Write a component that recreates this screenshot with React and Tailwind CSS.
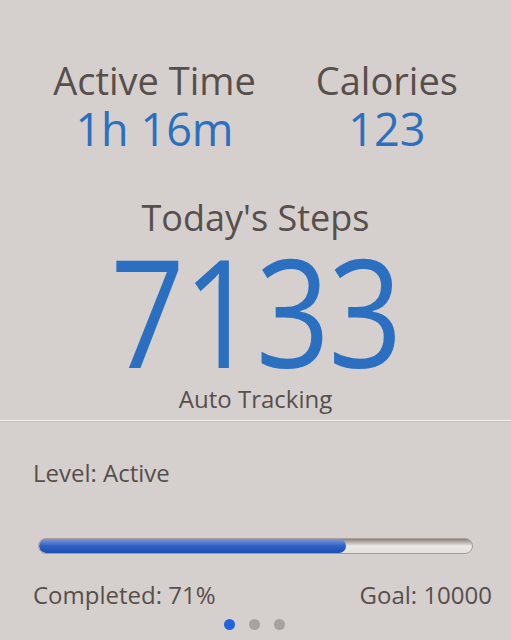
export default function App() {
  return (
    <div
      className="w-[511px] h-[640px] bg-[#d5d0cd] text-[#574f4c] flex flex-col overflow-hidden"
      style={{ fontFamily: '"Open Sans", sans-serif' }}
    >
      {/* top stats */}
      <div className="flex justify-center gap-[60px] pt-[56px]">
        <div className="flex flex-col items-center">
          <div className="text-[38px] leading-[48px]">Active Time</div>
          <div className="text-[45px] leading-[50px] text-[#2b6fc1]">1h 16m</div>
        </div>
        <div className="flex flex-col items-center">
          <div className="text-[38px] leading-[48px]">Calories</div>
          <div className="text-[45px] leading-[50px] text-[#2b6fc1]">123</div>
        </div>
      </div>

      {/* steps */}
      <div className="flex flex-col items-center mt-[42px]">
        <div className="text-[36px] leading-[44px]">Today's Steps</div>
        <div className="text-[151px] leading-[140px] tracking-[-2px] scale-x-[0.86] text-[#2b6fc1]">7133</div>
        <div className="mt-[4px] text-[24px] leading-[30px]">Auto Tracking</div>
      </div>

      <div className="mt-[6px] h-[2px] bg-[#f3f1ef] border-b border-[#c4bebb]" />

      {/* level + progress */}
      <div className="flex flex-col px-[33px] pt-[36px]">
        <div className="text-[24px] leading-[30px]">Level: Active</div>
        <div className="mt-[50px] mx-[5px] h-[16px] rounded-full bg-gradient-to-b from-[#8c817c] via-[#ece9e6] to-[#e4e0dd] overflow-hidden border border-[#a79e99]">
          <div
            className="h-full rounded-full bg-gradient-to-b from-[#7f95d8] via-[#2e60c6] to-[#1d4fae]"
            style={{ width: "71%" }}
          />
        </div>
        <div className="flex justify-between mt-[26px] text-[24px] leading-[30px] -mr-[14px]">
          <span>Completed: 71%</span>
          <span>Goal: 10000</span>
        </div>
      </div>

      <div className="flex justify-center gap-[14px] mt-[9px] -ml-[3px]">
        <div className="w-[11px] h-[11px] rounded-full bg-[#2163de]" />
        <div className="w-[11px] h-[11px] rounded-full bg-[#a9a19d]" />
        <div className="w-[11px] h-[11px] rounded-full bg-[#a9a19d]" />
      </div>
    </div>
  );
}
